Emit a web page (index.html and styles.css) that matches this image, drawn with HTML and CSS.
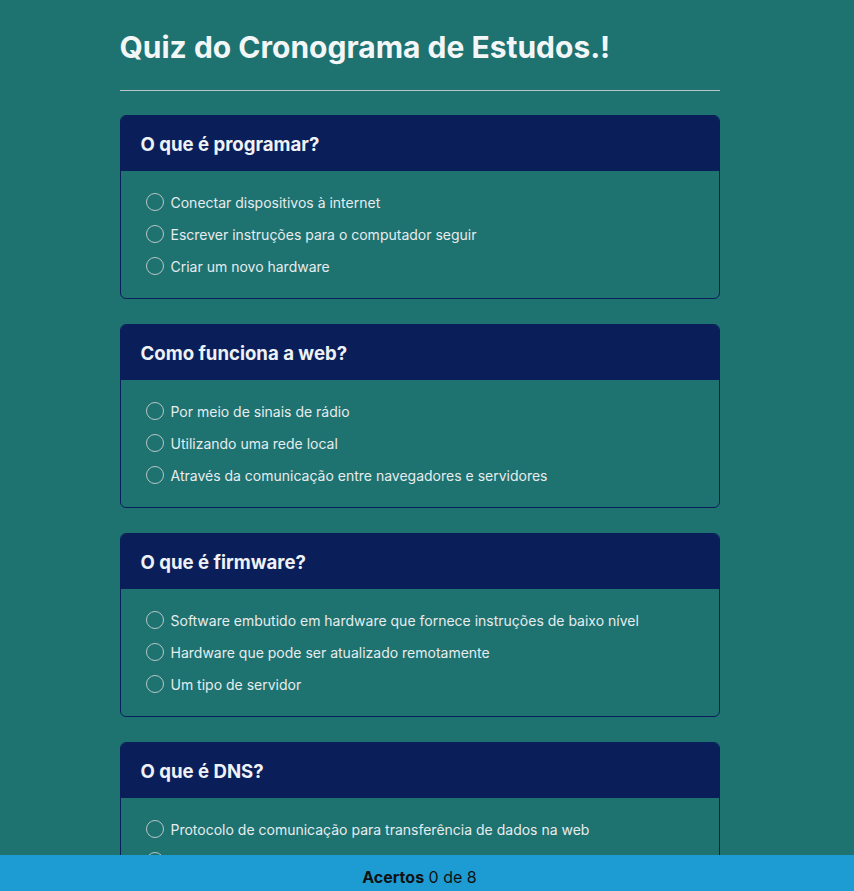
FILE: index.html
```html
<!DOCTYPE html>
<html lang="pt-BR">
<head>
<meta charset="utf-8">
<title>Quiz do Cronograma de Estudos</title>
<link rel="stylesheet" href="styles.css">
</head>
<body>
<main class="container">
  <h1 class="title">Quiz do Cronograma de Estudos.!</h1>
  <hr class="divider">

  <section class="card">
    <h2 class="card-header">O que é programar?</h2>
    <div class="card-body">
      <label class="option"><input type="radio" name="q1"><span>Conectar dispositivos à internet</span></label>
      <label class="option"><input type="radio" name="q1"><span>Escrever instruções para o computador seguir</span></label>
      <label class="option"><input type="radio" name="q1"><span>Criar um novo hardware</span></label>
    </div>
  </section>

  <section class="card">
    <h2 class="card-header">Como funciona a web?</h2>
    <div class="card-body">
      <label class="option"><input type="radio" name="q2"><span>Por meio de sinais de rádio</span></label>
      <label class="option"><input type="radio" name="q2"><span>Utilizando uma rede local</span></label>
      <label class="option"><input type="radio" name="q2"><span>Através da comunicação entre navegadores e servidores</span></label>
    </div>
  </section>

  <section class="card">
    <h2 class="card-header">O que é firmware?</h2>
    <div class="card-body">
      <label class="option"><input type="radio" name="q3"><span>Software embutido em hardware que fornece instruções de baixo nível</span></label>
      <label class="option"><input type="radio" name="q3"><span>Hardware que pode ser atualizado remotamente</span></label>
      <label class="option"><input type="radio" name="q3"><span>Um tipo de servidor</span></label>
    </div>
  </section>

  <section class="card">
    <h2 class="card-header">O que é DNS?</h2>
    <div class="card-body">
      <label class="option"><input type="radio" name="q4"><span>Protocolo de comunicação para transferência de dados na web</span></label>
      <label class="option"><input type="radio" name="q4"><span>Sistema que traduz nomes de domínio em endereços IP</span></label>
      <label class="option"><input type="radio" name="q4"><span>Um tipo de cabo de rede</span></label>
    </div>
  </section>
</main>

<footer class="score-bar">
  <p class="score"><strong>Acertos</strong> 0 de 8</p>
</footer>
</body>
</html>
```

FILE: styles.css
```css
html, body {
  margin: 0;
  padding: 0;
}

body {
  background: #1e7270;
  font-family: Inter, "Noto Sans", sans-serif;
  color: #e9eef0;
  padding-right: 15px;
  padding-bottom: 60px;
}

.container {
  width: 600px;
  margin: 0 auto;
  padding-top: 25px;
}

.title {
  margin: 0;
  font-size: 30px;
  line-height: 44px;
  font-weight: 700;
  color: #f2f6f7;
}

.divider {
  margin: 21px 0 24px;
  border: 0;
  border-top: 1px solid #b9c6c8;
  height: 0;
}

.card {
  border: 1px solid #0a1f5a;
  border-radius: 6px;
  overflow: hidden;
  margin-bottom: 25px;
}

.card-header {
  margin: 0;
  background: #0a1f5a;
  height: 55px;
  padding: 0 20px;
  display: flex;
  align-items: center;
  font-size: 18.6px;
  font-weight: 700;
  color: #eef2f6;
}

.card-body {
  padding: 15px 24px 16px;
  display: flex;
  flex-direction: column;
}

.option {
  display: flex;
  align-items: center;
  gap: 7px;
  height: 32px;
  font-size: 14px;
  color: #e6ecee;
}

.option input {
  appearance: none;
  -webkit-appearance: none;
  margin: 0 0 0 1px;
  width: 18px;
  height: 18px;
  border: 1.5px solid #b8c6c9;
  border-radius: 50%;
  box-sizing: border-box;
  flex: none;
}

.score-bar {
  position: fixed;
  left: 0;
  right: 0;
  bottom: -8px;
  height: 44px;
  padding-right: 15px;
  background: #1d9bd3;
  text-align: center;
}

.score {
  margin: 0;
  padding-top: 12px;
  line-height: 20px;
  font-size: 16px;
  color: #111;
}
```
